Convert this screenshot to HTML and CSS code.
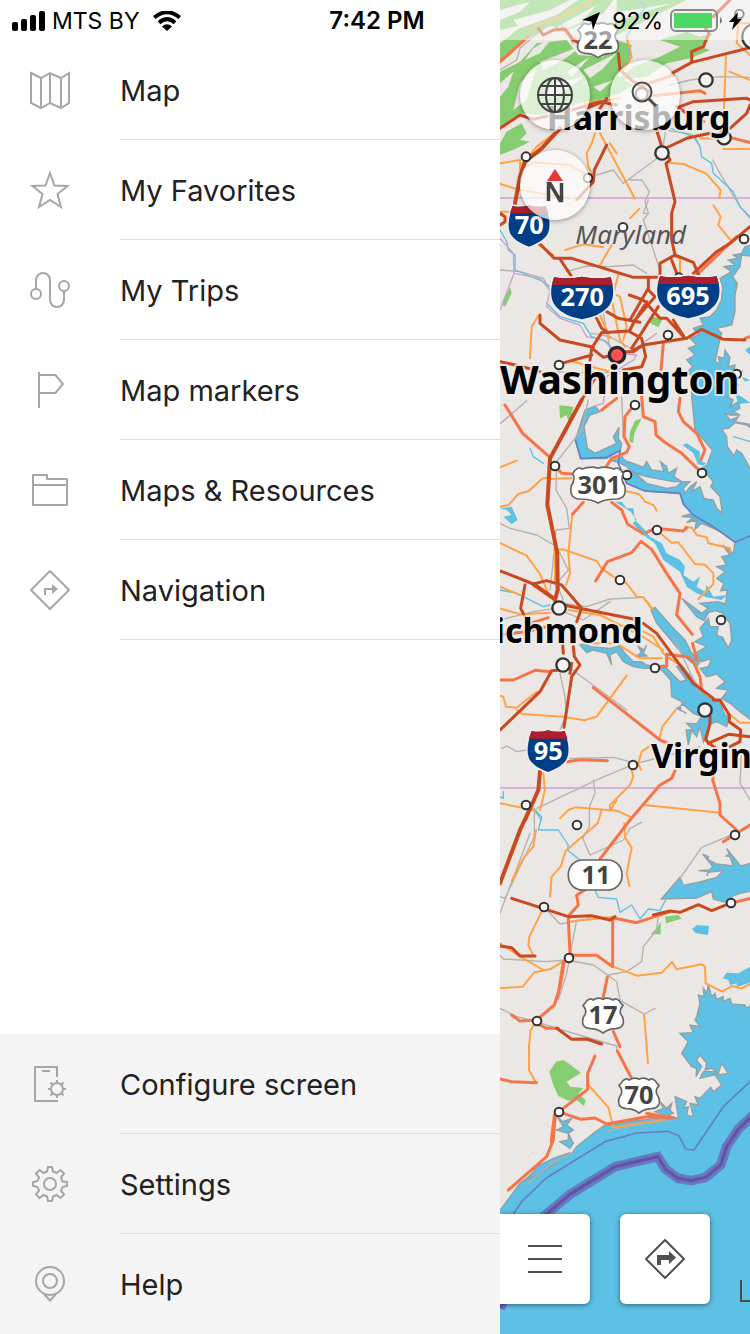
FILE: index.html
```html
<!DOCTYPE html>
<html lang="en">
<head>
<meta charset="utf-8">
<meta name="viewport" content="width=device-width, initial-scale=1">
<title>Map menu</title>
<link rel="stylesheet" href="styles.css">
</head>
<body>
<div class="app">
  <header class="status">
    <div class="status-left">
      <svg class="signal" viewBox="0 0 34 20" aria-hidden="true"><rect x="0" y="11" width="6" height="9" rx="2"/><rect x="9" y="8" width="6" height="12" rx="2"/><rect x="18" y="4" width="6" height="16" rx="2"/><rect x="27" y="0" width="6" height="20" rx="2"/></svg>
      <span>MTS BY</span>
      <svg class="wifi" viewBox="0 0 28 20" aria-hidden="true"><path d="M1.200 6.500Q14-4 26.800 6.500M6 11.700Q14 4.700 22 11.700" fill="none" stroke="#000" stroke-width="4"/><path d="M9 15.500Q14 11 19 15.500L14 20Z"/></svg>
    </div>
    <time class="clock">7:42 PM</time>
    <div class="status-right">
      <svg class="locate" viewBox="0 0 18 18" aria-hidden="true"><path d="M18 0L11 18 9.500 9.500 0 8Z"/></svg>
      <span>92%</span>
      <svg class="battery" viewBox="0 0 53 24" aria-hidden="true"><rect x="1" y="1" width="46" height="21" rx="5" fill="none" stroke="#898989" stroke-width="2"/><rect x="4" y="4" width="38" height="15" fill="#4cd964"/><path d="M50 8Q54 11.500 50 15Z" fill="#777"/></svg>
      <svg class="bolt" viewBox="0 0 13 18" aria-hidden="true"><path d="M9 0L0 10H5L3 18 13 7H8Z"/></svg>
    </div>
  </header>

  <nav class="drawer" aria-label="Main menu">
    <ul class="menu">
      <li><a class="item" href="#map"><svg class="icon" viewBox="0 0 40 40"><path d="M1 3L11 8 20 3 31 8 39 3V33L31 38 20 33 11 38 1 33ZM11 8V38M20 3V33M31 8V38"/></svg><span class="label">Map</span></a></li>
      <li><a class="item" href="#favorites"><svg class="icon" viewBox="0 0 40 40"><path d="M20 3L24.500 15.500 37.500 16 27.500 24 31 37 20 30 9 37 12.500 24 2.500 16 15.500 15.500Z"/></svg><span class="label">My Favorites</span></a></li>
      <li><a class="item" href="#trips"><svg class="icon" viewBox="0 0 40 40"><circle cx="6" cy="24" r="5"/><circle cx="34" cy="16" r="5"/><path d="M6 19V10A7 7 0 0 1 20 10V30A7 7 0 0 0 34 30V21"/></svg><span class="label">My Trips</span></a></li>
      <li><a class="item" href="#markers"><svg class="icon" viewBox="0 0 40 40"><path d="M9 2V38M9 5H25.500L33 14 25.500 23H9"/></svg><span class="label">Map markers</span></a></li>
      <li><a class="item" href="#resources"><svg class="icon" viewBox="0 0 40 40"><path d="M3 35V5H17V9H37V35ZM3 15H37" stroke-linejoin="round"/></svg><span class="label">Maps &amp; Resources</span></a></li>
      <li><a class="item" href="#navigation"><svg class="icon" viewBox="0 0 40 40"><path d="M20 1L39 20 20 39 1 20Z" stroke-linejoin="round"/><path d="M15 25V19H23"/><path class="solid" d="M22 14L28 19 22 24Z"/></svg><span class="label">Navigation</span></a></li>
    </ul>
    <ul class="menu menu-bottom">
      <li><a class="item" href="#configure"><svg class="icon" viewBox="0 0 40 40"><path d="M27 13V3H5V37H28M12 7H20" stroke-linejoin="round"/><circle cx="27" cy="25" r="6"/><path d="M27 19V16M27 31V34M21 25H18M33 25H36M22.500 20.500L20.500 18.500M31.500 20.500L33.500 18.500M22.500 29.500L20.500 31.500M31.500 29.500L33.500 31.500"/></svg><span class="label">Configure screen</span></a></li>
      <li><a class="item" href="#settings"><svg class="icon" viewBox="0 0 40 40"><circle cx="20" cy="20" r="6"/><path d="M18 3H22L23 7.500 26.500 9 30.500 6 34 9.500 31 13.500 32.500 17.500 37 18V22L32.500 23 31 26.500 34 30.500 30.500 34 26.500 31 23 32.500 22 37H18L17 32.500 13.500 31 9.500 34 6 30.500 9 26.500 7.500 23 3 22V18L7.500 17 9 13.500 6 9.500 9.500 6 13.500 9 17 7.500Z"/></svg><span class="label">Settings</span></a></li>
      <li><a class="item" href="#help"><svg class="icon" viewBox="0 0 40 40"><circle cx="20" cy="17" r="14"/><circle cx="20" cy="17" r="7"/><path d="M14 30L20 36.500 26 30"/></svg><span class="label">Help</span></a></li>
    </ul>
  </nav>

  <main class="map">
    <svg class="canvas" viewBox="0 0 750 4002" preserveAspectRatio="xMinYMin slice" role="img" aria-label="Map of the Washington region">
      <defs>
        <path id="us" d="M-54-38Q-42-58-30-48-14-58 0-50 14-58 30-48 42-58 54-38L60-32Q44-14 58 2 70 34 38 38 18 38 0 51-18 38-38 38-70 34-58 2-44-14-60-32Z"/>
        <path id="us3" d="M-76-34Q-62-58-48-48-20-58 0-50 20-58 48-48 62-58 76-34 66-18 80 2 88 40 56 42 20 42 0 54-20 42-56 42-88 40-80 2-66-18-76-34Z"/>
      </defs>
      <rect width="750" height="4002" fill="#ebe7e4"/>

      <g class="wood">
        <path d="M0 0H340L310 40 250 70 190 95 150 75 110 105 70 120 0 205ZM0 215L60 185 110 130 200 120 235 165 310 170 350 120 395 135 385 190 350 225 400 255 360 280 300 300 235 310 180 330 120 345 60 340 0 380Z"/>
        <path d="M350 0H560L510 25 430 65 340 110 300 100 350 45ZM480 120L560 95 600 110 640 100 600 140 630 150 570 175 500 190 440 230 350 240 400 200 480 170 540 140ZM20 395L65 370 80 400 60 420 90 425 50 445 0 465V430ZM150 300L240 260 310 250 250 300 180 340Z"/>
      </g>
      <g class="clearing">
        <path d="M40 60L150 30 210 0H235L170 45 60 85ZM0 190L90 120 60 165 0 215ZM120 185L250 135 190 180 130 210ZM180 75L290 15 240 70 150 110ZM60 250L110 200 80 300 40 330ZM250 210L350 160 310 205 270 235ZM0 90L70 75 0 130ZM250 60L350 50 330 75 260 85ZM160 250L250 230 200 270 130 300ZM100 145L160 110 120 160 75 180ZM330 40L520 10 430 35 320 75ZM0 30L90 5 60 35 0 60ZM0 250L40 215 25 260 0 290ZM200 215L270 170 240 205 215 230ZM300 120L350 105 310 140ZM280 260L340 240 300 275Z"/>
      </g>
      <g class="wood">
        <path d="M5 915L30 862 35 880 15 920ZM458 951L490 953 475 982 445 967Z"/>
        <path d="M178 1216L220 1220 215 1245 205 1264 200 1245 180 1256ZM405 1262L425 1255 402 1302 400 1330 388 1325 390 1295Z"/>
        <path d="M495 2750L535 2745 545 2756 498 2770ZM482 2765V2803H452L470 2785Z"/>
        <path d="M148 3215L168 3185 190 3180 205 3190 243 3218 200 3245 210 3260 250 3264 235 3282 257 3300 252 3318 230 3300 205 3302 175 3288 160 3255Z"/>
      </g>

      <g class="water">
        <path d="M760 735L735 740 725 760 700 765 715 775 685 780 705 795 672 800 695 815 660 835 668 860 664 900 650 930 630 950 600 955 610 975 580 985 595 1005 570 1015 590 1035 565 1045 585 1065 560 1080 578 1100 562 1115 575 1130V1190L585 1290 637 1350 621 1395 605 1405 640 1445 632 1460 660 1490 667 1540 650 1525 640 1500 612 1495 600 1460 575 1475 590 1445 570 1460 555 1480 550 1465 570 1445 520 1445 440 1430 400 1418 380 1400 358 1388 335 1382 358 1375 360 1350 320 1376 242 1376 226 1320 255 1230 285 1218 300 1235 270 1245 252 1280 262 1345 285 1360 350 1330 340 1310 357 1282 355 1315 365 1330 360 1362 375 1382 400 1390 430 1402 440 1385 455 1410 492 1415 482 1385 500 1400 505 1420 530 1405 522 1430 545 1445 530 1460 500 1465 440 1450 400 1415 375 1430 380 1450 435 1473 540 1480 550 1512 575 1540 545 1550 580 1552 560 1568 590 1560 585 1588 605 1570 640 1585 680 1605 705 1625 700 1660 668 1635 690 1665 665 1670 680 1695 650 1700 675 1715 650 1735 672 1750 662 1772 682 1770 676 1812 655 1805 600 1810 625 1825 605 1840 545 1795 590 1850 612 1862 625 1838 645 1832 665 1838 690 1870 695 1920 685 1945 668 1912 650 1905 655 1880 630 1880 625 1855 600 1885 610 1910 585 1925 620 1940 585 1960 605 1985 635 1975 625 2000 600 2005 620 2030 650 2022 675 2045 650 2065 685 2070 665 2095 690 2110 720 2135 760 2165Z"/>
        <path d="M548 1335L560 1330 600 1355 598 1380 618 1390 610 1397 594 1393 580 1360ZM345 1505L365 1505 380 1525 400 1525 405 1560 430 1585 450 1610 485 1630 500 1660 540 1680 555 1700 550 1725 580 1745 600 1730 590 1760 615 1775 620 1755 640 1790 680 1785 665 1800 620 1792 590 1780 560 1760 540 1715 490 1680 465 1630 430 1605 398 1570 410 1560 392 1535 365 1518ZM0 1525L35 1520 53 1560 35 1572 10 1550 35 1545 20 1530Z" stroke="none"/>
        <path d="M240 1935L255 1930 270 1940 330 1945 360 1938 375 1960 400 1985 425 1985 440 1995 470 2000 490 1995 520 2025 540 2045 560 2040 530 2000 545 1995 580 2040 620 2090 640 2095 660 2108 675 2145 690 2150 680 2180 650 2165 625 2175 610 2225 600 2180 590 2210 575 2190 565 2235 558 2190 580 2190 560 2170 590 2172 605 2150 580 2140 545 2110 540 2130 560 2140 530 2125 555 2110 515 2090 512 2040 480 2005 430 2005 400 2000 370 1985 350 1955 330 1965 335 1995 320 1960 280 1950 260 1958ZM415 1940L432 1950 440 1935 430 1960 440 1968 405 1970 425 1958ZM453 1830L465 1822 520 1885 555 1920 575 1960 600 1985 590 2000 555 1970 500 1905 470 1870Z"/>
        <path d="M484 2697L540 2632 550 2656 600 2646 650 2632 670 2612 625 2617 620 2628 625 2615 595 2612 628 2610 638 2600 608 2562 625 2570 623 2578 650 2592 700 2598 690 2570 678 2568 688 2562 680 2546 722 2598 750 2590H760V2672L720 2680 700 2688 675 2707 640 2697 635 2675 590 2694Z"/>
        <path d="M576 2788L590 2775 627 2778 624 2805 588 2800ZM668 2935L680 2918 715 2920 750 2900H760V2944L710 2962 710 2950 690 2955 685 2940Z" stroke="none"/>
        <path d="M760 3010L740 3025 735 3015 695 3012 690 2995 668 3005 670 2990 650 2998 645 2980 635 2990 625 2955 620 2980 610 2965 612 2990 595 2985 600 3010 590 3050 585 3060 600 3080 570 3075 580 3098 540 3100 565 3125 545 3160 575 3200 590 3205 588 3230 605 3200 590 3180 600 3165 620 3190 615 3210 635 3205 650 3215 610 3215 600 3235 640 3225 655 3220 665 3190 685 3220 645 3225 665 3255 640 3275 632 3262 600 3295 585 3290 595 3315 570 3310 580 3350 560 3345 565 3320 550 3325 560 3305 525 3290 535 3355 515 3350 500 3340 470 3355 320 3372 280 3400 230 3440 215 3460 150 3485 60 3550 -10 3645V4010H760Z"/>
        <path d="M172 3350L188 3365 215 3355 200 3375 220 3390 205 3400 220 3430 210 3445 180 3425 205 3420 205 3400 170 3390 190 3380ZM110 3500L160 3475 210 3458 160 3495 120 3520 70 3545 100 3515ZM480 3305L500 3325 515 3310 510 3330 520 3340 490 3345 465 3335 490 3325Z"/>
      </g>
      <g class="land">
        <path d="M760 770L725 765 720 800 698 830 712 850 705 885 705 935 695 975 650 985 665 1000 655 1040 645 1085 660 1092 655 1070 672 1075 675 1050 690 1072 685 1100 705 1095 700 1125 725 1115 700 1150 715 1155 690 1170 705 1180 680 1190 700 1200 690 1220 715 1205 720 1225 700 1235 720 1245 690 1245 675 1240 690 1260 715 1250 705 1265 760 1275Z"/>
        <path d="M760 1290L740 1275 705 1268 685 1285 665 1287 680 1310 682 1340 702 1368 710 1350 725 1360 750 1405 760 1408Z"/>
      </g>
      <path class="inlet" d="M705 1180L725 1190 750 1208 715 1212ZM735 1050L750 1040V1065ZM725 1130L750 1140 735 1145Z"/>

      <g class="rail">
        <path d="M0 210L50 180 60 145 100 110 140 80 180 70 220 130M370 550L485 465 497 390 575 403 600 440M370 550L340 510 290 525M390 540L425 540 448 575 435 605 445 640 430 660 440 690 480 810M0 810L60 815 130 835M200 815L260 798 330 800 400 795 440 820M638 480L660 520 720 620 750 655M510 255L570 240 660 230 750 232M0 1272L80 1202M440 640L430 640 445 600M130 835L150 875 190 870 200 830M275 1000L330 1010 400 1050 470 1000M150 1115L290 1120 360 1115M310 940L340 1100M365 1190L370 1310"/>
        <path d="M265 1200L245 1290 190 1360 170 1385 168 1470 200 1525 208 1585 168 1590 158 1700 150 1770M0 1570L30 1585 110 1605 170 1640 190 1680 205 1710 170 1750 190 1800M190 1810L260 1820 330 1797 430 1792M0 1860L100 1835 170 1825 250 1860 330 1805"/>
        <path d="M190 1990L340 2100 380 2130M180 2020L195 2090 200 2140 180 2190M5 2245L20 2238 50 2255 80 2250M210 2275L340 2272 410 2290 470 2275M410 2290L600 2240M110 2425L300 2335 385 2300M280 2340L285 2380 268 2420V2480L248 2515 270 2565 370 2520 390 2485 425 2467M725 2250L720 2350 750 2400M0 2690L15 2695 103 2510V2430M0 2740L90 2500M705 2500L605 2542 540 2635M475 2740L470 2790 430 2840 425 2885 380 2915 325 2925M0 2865L10 2877 140 2885 200 2880 280 2895 325 2927 350 2945 360 3000 375 3010 433 3042 465 3025M230 2760L200 2920 175 3000M140 2730L180 2772 270 2755M0 3025L50 3050 110 3065 170 3085 350 3138V3150"/>
        <path d="M80 3553L150 3495 215 3458M325 3392L490 3358 510 3365M520 1910L600 2080"/>
      </g>
      <g class="river">
        <path d="M415 0L437 20 380 110 390 180 370 200M500 380L585 412 600 440 605 470 635 490 640 520 700 575 720 620 750 650M0 690L20 725 25 750 45 765V810L130 845 150 860M140 910L180 950 250 970 275 1010 320 1025 350 1060M90 1345L100 1370 130 1390M0 1770L50 1780 130 1820 150 1815M0 2390L10 2395V2375M100 2425L125 2450 115 2490H175L205 2535 202 2550 240 2580M285 2670L295 2692 350 2697 360 2737 395 2715 420 2757 445 2727 480 2732 497 2700M95 2420L125 2460M700 1310L750 1325"/>
      </g>
      <g class="border">
        <path d="M0 594H750M0 2364H750M0 715L40 760 42 820 0 930M42 820L120 835 150 870 140 920 180 955 240 975 260 1010 310 1020 350 1060 410 1065 400 1080 320 1130 310 1210 285 1218"/>
      </g>
      <path class="sea-border" d="M226 1320L242 1376 320 1372 360 1352 355 1390 380 1450 435 1473 540 1480 550 1512 580 1545 640 1580 705 1627 760 1603"/>

      <g class="primary">
        <path d="M90 85L230 30 280 0M380 110L395 170 370 210M0 490L60 480 60 510 100 487 210 495 260 525M0 552L60 570 210 595M170 395L110 440 60 500M285 400L275 430 260 460 265 500 275 520M300 400L405 596M330 430L350 460M678 165L672 325M688 215L750 240M600 415L695 418M670 447H750M508 488L550 492 618 520 662 570 658 594M418 627L390 655M640 615L662 650 655 675 695 725M750 70L715 70 710 130 750 165M335 735L300 795M115 735L160 765M195 750L250 733 310 742M525 770L540 775V830M525 855L500 840M355 825L335 900 360 1020 375 1040M350 885L360 890 380 980 370 1020M300 945L330 1015M115 947L95 980 90 1075M0 635H25M220 1085L330 1115M255 310L360 295"/>
        <path d="M50 1382L0 1402M215 1434L155 1437M0 1520L25 1515 55 1482 87 1473 125 1437 150 1430V1385M217 1540L205 1660 210 1720 198 1755M375 1473L417 1482 435 1505 460 1515 470 1532M555 1580L575 1583 590 1605 620 1612 625 1630 690 1645V1655M485 1603L515 1628 535 1627 585 1692 615 1694 640 1720V1752L595 1797M0 1629L80 1667 120 1722 145 1780M163 1650L190 1648 290 1683 305 1705 340 1730 380 1750 410 1790 430 1792 457 1825M0 1760L60 1785M165 1630V1750M0 1825L60 1843 150 1838M205 1830L300 1845 420 1905 490 1950"/>
        <path d="M270 1930L350 1930 420 1975 485 1975M435 1800L455 1825M430 1895L460 1910 490 1960 530 1990M380 2027L290 2150 252 2161 190 2150 65 2142 50 2130M0 2087L10 2090 18 2120 50 2123 110 2075M527 2130L487 2180 478 2220M685 2140L720 2168H750M130 2320L135 2370 120 2430M0 2410L110 2432M450 2238L425 2255 415 2290 423 2310M395 2310L400 2330 390 2355 330 2415V2430M432 2415L660 2438"/>
        <path d="M180 2455L205 2430 225 2422 350 2432 390 2450M330 2432L350 2400M305 2430L293 2470 197 2553 182 2600 155 2630 150 2690M373 2470L375 2512 395 2543 380 2620 388 2658M108 2490L100 2540 70 2575 35 2642M130 2725L88 2810 85 2835 100 2867M205 2765L340 2750M0 2965L68 2960 103 2917 150 2908 192 2882M0 2830L60 2870 130 2910M340 2900L410 2927 485 2918 516 2886 530 2908 605 2893 615 2900 617 2950 667 2975 695 2958 725 2965 750 2952M432 3042L444 3190M105 3070L92 3090 87 3140V3210L108 3248M265 3255L325 3322 340 3382 485 3362"/>
      </g>
      <g class="trunk">
        <path d="M0 185L85 110M430 255L520 225M460 287L600 272 615 280M750 428L690 412M710 710L590 825M490 1030L483 1110M425 1190L430 1250 465 1265 468 1305 492 1325 545 1360 605 1418M540 1195L535 1235 550 1265 590 1300 615 1350 602 1380M15 1215L68 1300 150 1372M400 1218L375 1250 372 1310 388 1340 380 1357 335 1375 312 1410M350 1195L305 1230M165 1397L185 1420 215 1422M250 1507L218 1542M335 1507L365 1530 383 1573 428 1600M440 1597L465 1585 550 1593 560 1583M287 1743L322 1685 395 1658 423 1624 455 1648 500 1720 540 1780 530 1845 577 1903M735 1015L750 1010"/>
        <path d="M0 2040H40L105 2011 150 2015M90 1870L145 1853M280 2063L480 2220 530 2240M0 1905L90 1893 140 1880M200 2285L240 2279 322 2282M465 2003L500 1998V1963L560 1970 580 1985 600 2030 605 2070M578 1930L590 1980M525 2312L515 2335 480 2355 390 2460 300 2577M645 2240V2300L638 2340 660 2410V2445L710 2490M670 2525L750 2475M255 2670L230 2685 235 2715 208 2745 205 2760 210 2860 223 2866H290L338 2900V2755M345 2755L410 2768 510 2735M690 2710L750 2695M322 2932L310 2990M210 2858L192 2890 180 2960 163 3015 110 3060 60 3063 35 3045M190 2885L175 2980 165 3010M340 3095L360 3140M352 3153L400 3245M110 3070L140 3085H175M0 3237L35 3245 110 3248M285 3168L263 3220V3268L190 3325M190 3340L243 3358 285 3354 320 3372 440 3350 520 3353M165 3345L160 3420 140 3470 25 3570M440 3340L490 3350"/>
      </g>
      <path class="trunk wide" d="M165 3345L155 3425"/>
      <g class="motorway">
        <path d="M0 385L60 345 100 358 200 335 300 305 350 315M115 85L130 105 160 90 195 87 220 120 235 128M355 160L360 210 400 245 450 275M515 220L575 187 750 143M575 187V155L610 140 627 100 615 82M640 50L690 0M260 325L320 300M300 325L320 295M540 320L580 305 740 295 750 300M690 385L740 340 750 315M470 390L485 440 500 460 510 480 498 490 525 605 515 640M485 450L560 415 630 400M320 435L283 510 280 545 230 600M515 640V720L525 765M530 320L560 340M610 365L600 355"/>
        <path d="M120 732L163 775H215L400 832H470M180 777L215 830M480 835V790L525 765 580 787 598 830M515 780L530 820M750 680L690 730 650 755 580 820M0 640L15 650V665L0 675M445 832V870L465 890M388 885L430 900 480 955H500L555 1015M445 865L390 960M465 890L405 960 390 990M475 920L395 1045M440 905L400 970M320 935L355 955 420 967M120 945V970L180 1020 280 1042M290 955L305 985 320 995M305 998L385 993 425 1015 437 1070 425 1100 370 1110M305 998L275 1045 270 1080M270 1040L310 1072 340 1065M400 1050L430 1035 560 1015 605 988 670 1018 735 1020M375 1055H400L430 1035M185 1090L275 1065M0 1085L60 1098 120 1115M285 1135L245 1200M520 960L555 1015"/>
        <path d="M0 1713L20 1720 100 1752 165 1798M75 1755L62 1825 75 1850M100 1752L140 1742 185 1755 245 1825 230 1865M190 1815L400 1857M210 2020L215 1990M188 1930L190 1960M220 1940L223 1970 240 1995 215 2030 192 2182M0 2190L120 2075 155 2012 180 2010M430 1870L470 1900 580 2050 640 2095M640 2100H660L688 2145V2165L722 2190 720 2225 690 2240M625 2230L685 2203 750 2210M630 2145V2170L617 2220 640 2240"/>
        <path d="M35 2695L205 2750 275 2747 330 2760 345 2750M460 2745L510 2733 540 2737 595 2714 635 2732 690 2710M0 2838L35 2843 60 2868H105M170 3085L215 3118 260 3117 305 3132"/>
      </g>
      <g class="motorway wide">
        <path d="M180 385L125 445 75 485 60 530 45 610M245 1200L150 1375 142 1515 172 1660 173 1770 165 1800M100 1752L165 1798M120 2315L115 2370 75 2460M102 2400L60 2490 0 2650"/>
      </g>

      <g class="sea-line"><path d="M750 3245L670 3320 582 3450 557 3447 537 3407 503 3394 410 3399 315 3425 140 3533 65 3605 40 3642"/></g>
      <path d="M0 3925L130 3650 210 3583 345 3500 473 3470 497 3508 535 3535 575 3542 617 3532 662 3495 680 3440 717 3385 760 3345" fill="none" stroke="#657bc0" stroke-width="29"/>
      <path d="M0 3925L130 3650 210 3583 345 3500 473 3470 497 3508 535 3535 575 3542 617 3532 662 3495 680 3440 717 3385 760 3345" fill="none" stroke="#6553aa" stroke-width="10"/>

      <g class="town">
        <circle cx="78" cy="470" r="13"/><circle cx="264" cy="534" r="13"/><circle cx="718" cy="42" r="13"/><circle cx="369" cy="682" r="13"/><circle cx="732" cy="717" r="13"/><circle cx="537" cy="833" r="13"/><circle cx="504" cy="1005" r="13"/><circle cx="177" cy="1095" r="13"/><circle cx="710" cy="1122" r="13"/><circle cx="405" cy="1215" r="13"/><circle cx="165" cy="1398" r="13"/><circle cx="381" cy="1425" r="13"/><circle cx="606" cy="1419" r="13"/><circle cx="471" cy="1590" r="13"/><circle cx="360" cy="1740" r="13"/><circle cx="663" cy="1860" r="13"/><circle cx="465" cy="2004" r="13"/><circle cx="399" cy="2295" r="13"/><circle cx="78" cy="2415" r="13"/><circle cx="231" cy="2475" r="13"/><circle cx="705" cy="2505" r="13"/><circle cx="132" cy="2721" r="13"/><circle cx="693" cy="2709" r="13"/><circle cx="207" cy="2874" r="13"/><circle cx="111" cy="3063" r="13"/><circle cx="177" cy="3336" r="13"/>
      </g>
      <g class="town city">
        <circle cx="425" cy="282" r="18"/><circle cx="618" cy="240" r="20"/><circle cx="672" cy="413" r="20"/><circle cx="486" cy="459" r="20"/><circle cx="765" cy="110" r="38"/><circle cx="177" cy="1824" r="20"/><circle cx="189" cy="1995" r="20"/><circle cx="615" cy="2130" r="20"/>
      </g>
      <circle cx="351" cy="1065" r="23" fill="#ff5050" stroke="#292929" stroke-width="10"/>

      <g class="us-shield">
        <use href="#us" x="294" y="122"/><use href="#us3" x="294" y="1455"/><use href="#us" x="309" y="3048"/><use href="#us" x="417" y="3288"/>
        <rect x="205" y="2580" width="161" height="90" rx="43"/>
      </g>
      <g class="interstate">
        <path class="blue" d="M38 618Q62 624 87 616 112 624 137 618 162 690 133 714 120 728 87 740 54 728 41 714 12 690 38 618Z"/>
        <path class="red" d="M38 618Q62 624 87 616 112 624 137 618L146 640H29Z"/>
        <path class="blue" d="M162 832Q205 838 246 830 290 838 332 832 350 890 325 920 300 948 246 958 192 948 168 920 142 890 162 832Z"/>
        <path class="red" d="M162 832Q205 838 246 830 290 838 332 832L338 855H156Z"/>
        <path class="blue" d="M480 829Q523 835 565 827 608 835 650 829 670 887 643 917 618 945 565 955 512 945 487 917 460 887 480 829Z"/>
        <path class="red" d="M480 829Q523 835 565 827 608 835 650 829L656 852H474Z"/>
        <path class="blue" d="M95 2193Q119 2199 144 2191 169 2199 194 2193 219 2265 190 2290 177 2304 144 2316 111 2304 98 2290 69 2265 95 2193Z"/>
        <path class="red" d="M95 2193Q119 2199 144 2191 169 2199 194 2193L203 2216H86Z"/>
      </g>
      <g class="num dark">
        <text x="294" y="147">22</text><text x="298" y="1482">301</text><text x="288" y="2653">11</text><text x="309" y="3072">17</text><text x="417" y="3312">70</text>
      </g>
      <g class="num light">
        <text x="88" y="703">70</text><text x="247" y="919">270</text><text x="564" y="916">695</text><text x="145" y="2279">95</text>
      </g>
      <g class="place">
        <text x="140" y="389">Harrisburg</text>
        <text class="capital" x="0" y="1181">Washington</text>
        <text x="428" y="1929" text-anchor="end">Richmond</text>
        <text x="453" y="2303">Virginia Beach</text>
      </g>
      <text class="state" x="226" y="731">Maryland</text>
    </svg>

    <div class="map-top">
      <button class="round" aria-label="Map layers"><svg viewBox="0 0 70 70"><g fill="none" stroke="#424242" stroke-width="2"><circle cx="35" cy="35" r="17"/><ellipse cx="35" cy="35" rx="9" ry="17"/><path d="M35 18V52M18 35H52M21 26H49M21 44H49"/></g></svg></button>
      <button class="round" aria-label="Search"><svg viewBox="0 0 70 70"><g fill="none" stroke="#4c4c4c" stroke-width="2"><circle cx="32" cy="32" r="9.500"/><path d="M39 39L46 46" stroke-width="3"/></g></svg></button>
      <button class="round" aria-label="Compass, north up"><svg viewBox="0 0 70 70"><path d="M35 19L43 31H27Z" fill="#e53935"/><path d="M28.500 51V33.500H30L40 50.500H41.500V33" fill="none" stroke="#444" stroke-width="3.500"/></svg></button>
    </div>
    <div class="map-bottom">
      <button class="tile tile-menu" aria-label="Menu"><svg viewBox="0 0 90 90"><path d="M28 32H62M28 45H62M28 58H62" stroke="#505050" stroke-width="2"/></svg></button>
      <button class="tile" aria-label="Directions"><svg viewBox="0 0 90 90"><path d="M45 26L64 45 45 64 26 45Z" fill="none" stroke="#505050" stroke-width="2" stroke-linejoin="round"/><path d="M37 51V41H49V37L56 43.500 49 50V46H41V51Z" fill="#505050"/></svg></button>
    </div>
    <div class="ruler"></div>
  </main>
</div>
</body>
</html>
```

FILE: styles.css
```css
* { box-sizing: border-box; }
html, body { margin: 0; height: 100%; }
body { font-family: Inter, "Liberation Sans", sans-serif; color: #222; background: #fff; }
svg { display: block; }

.app { position: relative; display: flex; min-height: 100%; overflow: hidden; }

/* Status bar lies over both the drawer and the map */
.status {
  position: absolute; top: 0; left: 0; right: 0; z-index: 2;
  display: grid; grid-template-columns: 1fr auto 1fr; align-items: center;
  height: 40px; padding: 0 8px 0 12px;
  background: rgba(255, 255, 255, .5);
  color: #000; font-size: 23px; line-height: 40px;
}
.status span, .clock { padding-top: 1px; }
.status-left, .status-right { display: flex; align-items: center; }
.status-right { justify-content: flex-end; }
.signal { width: 34px; height: 20px; margin-right: 6px; }
.wifi { width: 28px; height: 20px; margin-left: 13px; }
.clock { font-weight: 600; font-size: 24px; }
.locate { width: 18px; height: 18px; margin-right: 12px; }
.battery { width: 53px; height: 24px; margin: 0 6px 0 7px; }
.bolt { width: 13px; height: 18px; }

.drawer {
  flex: 2 1 0; min-width: 0;
  display: flex; flex-direction: column; justify-content: space-between;
  padding-top: 40px; background: #fff;
}
.menu { margin: 0; padding: 0; list-style: none; }
.menu-bottom { background: #f4f4f4; }
.item {
  display: flex; align-items: center; gap: 50px;
  height: 100px; padding-left: 30px;
  color: inherit; text-decoration: none; font-size: 29px;
}
.icon { flex: none; width: 40px; height: 40px; fill: none; stroke: #a6a6a6; stroke-width: 2; }
.icon .solid { fill: #a6a6a6; stroke: none; }
.label { flex: 1; padding-top: 2px; line-height: 97px; border-bottom: 1px solid #dedede; white-space: nowrap; }
.menu-bottom li:last-child .label { border-bottom-color: transparent; }

.map { position: relative; flex: 1 1 0; min-width: 0; overflow: hidden; background: #5cc1e4; }
.canvas { position: absolute; inset: 0; width: 100%; height: 100%; }

.wood { fill: #86cc70; }
.clearing { fill: #ebe7e4; }
.water { fill: #5cc1e4; stroke: #929fa4; stroke-width: 4; }
.land { fill: #ebe7e4; stroke: #929fa4; stroke-width: 4; }
.inlet { fill: #5cc1e4; }
.rail, .river, .border, .primary, .trunk, .motorway, .sea-line { fill: none; stroke-linejoin: round; stroke-linecap: round; }
.rail { stroke: #b3b1af; stroke-width: 4; }
.river { stroke: #5cc1e4; stroke-width: 4; }
.border { stroke: #cba1cf; stroke-width: 4; }
.sea-border, .sea-line { fill: none; stroke: #667fc4; stroke-width: 5; }
.primary { stroke: #ffa245; stroke-width: 6; }
.trunk { stroke: #f57549; stroke-width: 9; }
.motorway { stroke: #c94920; stroke-width: 9; }
.wide { stroke-width: 12; }
.town { fill: #fff; stroke: #333; stroke-width: 6; }
.city { fill: #f5f3f2; stroke-width: 7; }
.us-shield { fill: #fff; stroke: #666; stroke-width: 5; }
.interstate .blue { fill: #003f87; stroke: #eee; stroke-width: 10; paint-order: stroke; }
.interstate .red { fill: #af1e2d; }
.num, .place { font-family: "Noto Sans", "Open Sans", sans-serif; font-weight: 700; }
.num { font-size: 76px; text-anchor: middle; }
.dark { fill: #444; }
.light { fill: #fff; }
.place { font-size: 102px; fill: #000; stroke: rgba(240, 237, 235, .8); stroke-width: 12; stroke-linejoin: round; paint-order: stroke; }
.place .capital { font-size: 120px; }
.state { font: italic 400 78px "Noto Sans", "Open Sans", sans-serif; fill: #555; }

/* Controls floating over the map */
.map-top {
  position: absolute; top: 60px; left: 20px;
  display: grid; grid-template-columns: repeat(2, 70px); gap: 20px;
}
.round, .tile { padding: 0; border: 0; cursor: pointer; }
.round {
  width: 70px; height: 70px; border-radius: 50%;
  background: rgba(255, 255, 255, .7);
  box-shadow: 0 1px 5px rgba(0, 0, 0, .4);
}
.map-bottom { position: absolute; left: 0; bottom: 30px; display: flex; gap: 30px; }
.tile {
  width: 90px; height: 90px; border-radius: 6px; background: #fff;
  box-shadow: 0 1px 5px rgba(0, 0, 0, .5);
}
.tile-menu { border-radius: 0 6px 6px 0; }
.ruler {
  position: absolute; left: 240px; right: 0; bottom: 32px; height: 22px;
  border: solid #4c4c4c; border-width: 0 0 2px 2px;
}
```
